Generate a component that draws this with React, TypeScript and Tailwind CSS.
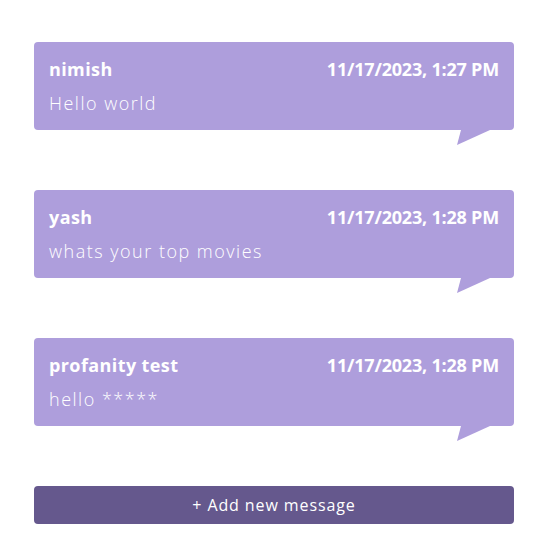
import React from "react";

type Message = {
  user: string;
  time: string;
  text: string;
};

const messages: Message[] = [
  { user: "nimish", time: "11/17/2023, 1:27 PM", text: "Hello world" },
  { user: "yash", time: "11/17/2023, 1:28 PM", text: "whats your top movies" },
  { user: "profanity test", time: "11/17/2023, 1:28 PM", text: "hello *****" },
];

function MessageBubble({ message }: { message: Message }) {
  return (
    <div className="flex flex-col">
      <div className="h-[88px] rounded-[4px] bg-[#ae9edc] px-[15px] pt-[14px] text-white">
        <div className="flex items-center justify-between text-[18px] font-bold leading-[26px]">
          <span className="tracking-[0.4px]">{message.user}</span>
          <span className="tracking-[-0.2px]">{message.time}</span>
        </div>
        <p className="mt-[9px] text-[18px] font-light leading-[24px] tracking-[1.5px]">{message.text}</p>
      </div>
      <svg className="ml-[423px] h-[15px] w-[33px]" viewBox="0 0 33 15">
        <polygon points="4,0 33,0 0,15" fill="#ae9edc" />
      </svg>
    </div>
  );
}

export default function App() {
  return (
    <div className="min-h-screen bg-white pt-[42px] font-['Open_Sans',sans-serif]">
      <div className="ml-[34px] flex w-[480px] flex-col gap-[45px]">
        {messages.map((m, i) => (
          <MessageBubble key={i} message={m} />
        ))}
        <button className="h-[38px] w-full rounded-[4px] bg-[#65588d] text-[16px] tracking-[0.9px] text-white">
          + Add new message
        </button>
      </div>
    </div>
  );
}
